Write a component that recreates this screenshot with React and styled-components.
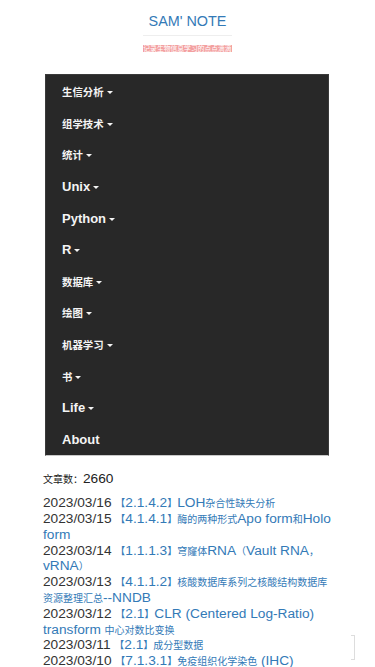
import React from "react";
import styled, { createGlobalStyle } from "styled-components";

const GlobalStyle = createGlobalStyle`
  body {
    margin: 0;
    background: #fff;
    font-family: "Liberation Sans", Arial, "Noto Sans CJK SC", sans-serif;
    color: #333;
  }
`;

const navItems = [
  "生信分析", "组学技术", "统计", "Unix", "Python", "R",
  "数据库", "绘图", "机器学习", "书", "Life", "About",
];

const posts = [
  ["2023/03/16", "【2.1.4.2】LOH杂合性缺失分析"],
  ["2023/03/15", "【4.1.4.1】酶的两种形式Apo form和Holo form"],
  ["2023/03/14", "【1.1.1.3】穹窿体RNA（Vault RNA，vRNA）"],
  ["2023/03/13", "【4.1.1.2】核酸数据库系列之核酸结构数据库资源整理汇总--NNDB"],
  ["2023/03/12", "【2.1】CLR (Centered Log-Ratio) transform 中心对数比变换"],
  ["2023/03/11", "【2.1】成分型数据"],
  ["2023/03/10", "【7.1.3.1】免疫组织化学染色 (IHC)"],
  ["2023/03/09", "【3.2.1】差异表达分析"],
  ["2023/03/08", "【1.2】测序数据质控"],
];

// han characters sit a little smaller than the latin text
const Han = styled.span`
  font-family: "Noto Sans CJK SC", sans-serif;
  font-size: ${(p) => p.$scale || 0.73}em;
`;

const zh = (s, scale) =>
  s
    .split(/([\u3000-\u303f\u4e00-\u9fff\uff00-\uffef]+)/)
    .map((part, i) =>
      i % 2 ? (
        <Han key={i} $scale={scale}>
          {part}
        </Han>
      ) : (
        part
      )
    );

const Header = styled.header`
  display: flex;
  flex-direction: column;
  align-items: center;
  padding-top: 13px;
`;

const Brand = styled.div`
  display: flex;
  flex-direction: column;
  align-items: stretch;
`;

const Title = styled.a`
  color: #337ab7;
  font-size: 14.4px;
  line-height: 16px;
  text-align: center;
  padding-bottom: 6px;
  border-bottom: 1px solid #eee;
  text-decoration: none;
`;

const Tagline = styled.div`
  margin-top: 9px;
  background: #f3a0a0;
  color: #fff;
  font-family: "Noto Sans CJK SC", sans-serif;
  font-size: 6.8px;
  line-height: 7px;
  height: 7px;
  white-space: nowrap;
  overflow: hidden;
`;

const Main = styled.main`
  padding: 22px 40px 20px 43px;
`;

const Navbar = styled.nav`
  margin: 0 6px 0 2px;
  background: #282828;
  border: 1px solid #3a3a3a;
  border-bottom-color: #c9c9c9;
  padding-top: 1px;
`;

const NavItem = styled.div`
  display: flex;
  align-items: center;
  height: 31.6px;
  padding-left: 16px;
  color: #f4f4f4;
  font-size: 13px;
  font-weight: bold;
`;

const Caret = styled.span`
  display: inline-block;
  margin-left: 3px;
  margin-top: 2px;
  border-top: 3.5px solid #f4f4f4;
  border-left: 3.5px solid transparent;
  border-right: 3.5px solid transparent;
`;

const Count = styled.div`
  margin-top: 15px;
  font-size: 13.7px;
  line-height: 16px;
  color: #222;
`;

const PostList = styled.div`
  margin-top: 8px;
  font-size: 13.7px;
  line-height: 15.8px;
`;

const Post = styled.div`
  color: #333;
`;

const PostLink = styled.a`
  color: #337ab7;
  text-decoration: none;
`;

const TopButton = styled.div`
  position: fixed;
  left: 351px;
  top: 635px;
  width: 3px;
  height: 23px;
  border: 1px solid #ddd;
  border-left: none;
`;

export default function App() {
  return (
    <>
      <GlobalStyle />
      <Header>
        <Brand>
          <Title href="#">SAM' NOTE</Title>
          <Tagline>记录生物信息学习的点点滴滴</Tagline>
        </Brand>
      </Header>
      <Main>
        <Navbar>
          {navItems.map((item) => (
            <NavItem key={item}>
              {zh(item, 0.8)}
              {item !== "About" && <Caret />}
            </NavItem>
          ))}
        </Navbar>
        <Count>{zh("文章数：2660")}</Count>
        <PostList>
          {posts.map(([date, title]) => (
            <Post key={date}>
              {date} <PostLink href="#">{zh(title)}</PostLink>
            </Post>
          ))}
        </PostList>
      </Main>
      <TopButton />
    </>
  );
}
